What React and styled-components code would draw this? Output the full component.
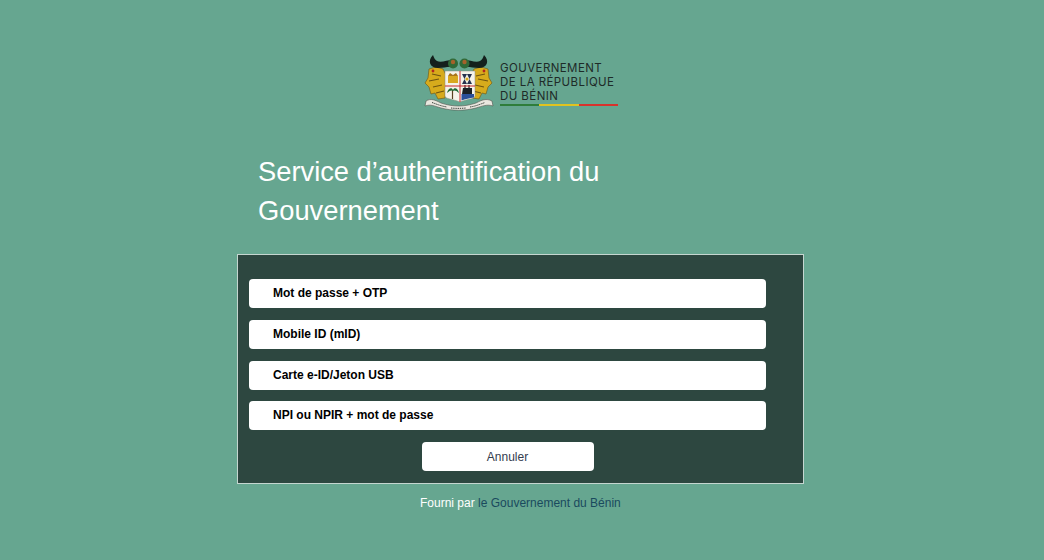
import styled, { createGlobalStyle } from "styled-components";

const GlobalStyle = createGlobalStyle`
  html, body {
    margin: 0;
    padding: 0;
    background: #66a690;
    font-family: "Liberation Sans", Arial, sans-serif;
  }
`;

const Page = styled.div`
  width: 1044px;
  height: 560px;
  overflow: hidden;
  background: #66a690;
  display: flex;
  flex-direction: column;
`;

const LogoRow = styled.div`
  display: flex;
  align-items: flex-start;
  gap: 6px;
  margin: 54px 0 0 423px;
  height: 58px;
`;

const LogoText = styled.div`
  padding-top: 7px;
  width: 118px;
  color: #1e2b28;
`;

const LogoLine = styled.div`
  font-family: "Inter", sans-serif;
  font-size: 11.5px;
  letter-spacing: 0.42px;
  line-height: 14px;
  white-space: nowrap;
`;

const Flag = styled.div`
  display: flex;
  height: 2px;
  margin-top: 1px;
`;

const FlagPart = styled.span`
  flex: 1;
  background: ${(p) => p.color};
`;

const Title = styled.h1`
  margin: 41px 0 0 258px;
  width: 400px;
  font-size: 27.3px;
  line-height: 38.5px;
  font-weight: 400;
  color: #fff;
`;

const Panel = styled.div`
  box-sizing: border-box;
  width: 567px;
  height: 230px;
  margin: 24px 0 0 237px;
  padding: 24px 37px 0 11px;
  background: #2d4740;
  border: 1px solid #c5d6d0;
  display: flex;
  flex-direction: column;
  gap: 11.75px;
`;

const Method = styled.button`
  box-sizing: border-box;
  height: 29px;
  padding: 0 0 1px 24px;
  border: none;
  border-radius: 4px;
  background: #fff;
  color: #000;
  font: bold 12px "Liberation Sans", Arial, sans-serif;
  text-align: left;
`;

const Cancel = styled.button`
  box-sizing: border-box;
  align-self: center;
  width: 172px;
  height: 29px;
  border: none;
  border-radius: 4px;
  background: #fff;
  color: #333c4e;
  font: 12px "Liberation Sans", Arial, sans-serif;
`;

const Footer = styled.p`
  margin: 12px 0 0 420px;
  font-size: 12px;
  line-height: 14px;
  color: #fff;
`;

const FooterLink = styled.a`
  color: #1a4a5e;
  text-decoration: none;
`;

function Crest() {
  return (
    <svg width="71" height="58" viewBox="0 0 71 58">
      {/* panthers */}
      <path d="M6 15 L13 13 L20 15 L23 21 L22 44 L15 45 L12 39 L8 40 L6 33 L2 29 L5 24 Z" fill="#d7ab1c" stroke="#6f5410" strokeWidth="0.6" />
      <path d="M65 15 L58 13 L51 15 L48 21 L49 44 L56 45 L59 39 L63 40 L65 33 L69 29 L66 24 Z" fill="#d7ab1c" stroke="#6f5410" strokeWidth="0.6" />
      <path d="M9 20 L18 22 M6 27 L16 25 M10 33 L19 31 M13 39 L21 37 M62 20 L53 22 M65 27 L55 25 M61 33 L52 31 M58 39 L50 37" stroke="#6f5410" strokeWidth="1.2" fill="none" />
      <circle cx="10" cy="17" r="1.4" fill="#b3261e" />
      <circle cx="61" cy="17" r="1.4" fill="#b3261e" />
      {/* horns */}
      <path d="M10 1 C4 7 7 14 15 14 C21 14 25 12 30 13 L30 6 C24 6 18 9 14 7 C12 6 11 4 10 1 Z" fill="#14201c" />
      <path d="M61 1 C67 7 64 14 56 14 C50 14 46 12 41 13 L41 6 C47 6 53 9 57 7 C59 6 60 4 61 1 Z" fill="#14201c" />
      <circle cx="30" cy="9.5" r="5" fill="#2f6a38" />
      <circle cx="30" cy="8" r="2.2" fill="#a5622a" />
      <circle cx="41.5" cy="9.5" r="5" fill="#2f6a38" />
      <circle cx="41.5" cy="8" r="2.2" fill="#a5622a" />
      {/* shield */}
      <path d="M22 17 H52 V42 C52 45 44 45 37 48 C30 45 22 45 22 42 Z" fill="#f5f3ea" stroke="#8b8a7c" strokeWidth="0.5" />
      <rect x="25" y="22" width="10" height="7" fill="#d8a820" />
      <path d="M25 22 L27 19 L30 21 L33 19 L35 22 Z" fill="#a8741a" />
      <path d="M39 20 H49 L44 30 Z M39 30 H49 L44 20 Z" fill="#27324f" />
      <circle cx="44" cy="25" r="1.6" fill="#d8a820" />
      <path d="M29.5 36 V45" stroke="#5a4020" strokeWidth="1.2" />
      <path d="M24 39 C25 34 29 33 30 36 C31 33 35 34 36 39 C33 36 31 36 30 37 C29 36 27 36 24 39 Z" fill="#1f6b35" />
      <path d="M40 34 H49 V40 H39 Z" fill="#1b2026" />
      <path d="M42 34 V31 M46 34 V31" stroke="#1b2026" strokeWidth="1.2" />
      <path d="M38.5 40 H51 V43.5 C47 44 42 45 38.5 46.5 Z" fill="#2a4f9a" />
      <path d="M37 17 V48 M22 32 H52" stroke="#c8282e" strokeWidth="1" />
      {/* ribbon */}
      <path d="M3 47 C8 44 12 46 18 49 C30 53 41 53 53 49 C59 46 63 44 69 47 L70 52 C64 50 60 52 53 54 C41 57 30 57 18 54 C11 52 8 50 2 52 Z" fill="#e9e7df" stroke="#4f544e" strokeWidth="0.6" />
      <path d="M9 48.5 C16 51 18 52 24 53 M28 54 C33 54.5 38 54.5 43 54 M47 53 C53 52 55 51 62 48.5" stroke="#3a3f3a" strokeWidth="1" strokeDasharray="1.4 0.8" fill="none" />
    </svg>
  );
}

export default function App() {
  return (
    <Page>
      <GlobalStyle />
      <LogoRow>
        <Crest />
        <LogoText>
          <LogoLine>GOUVERNEMENT</LogoLine>
          <LogoLine>DE LA RÉPUBLIQUE</LogoLine>
          <LogoLine>DU BÉNIN</LogoLine>
          <Flag>
            <FlagPart color="#2e7d3a" />
            <FlagPart color="#e0c320" />
            <FlagPart color="#d8322c" />
          </Flag>
        </LogoText>
      </LogoRow>
      <Title>Service d’authentification du Gouvernement</Title>
      <Panel>
        <Method>Mot de passe + OTP</Method>
        <Method>Mobile ID (mID)</Method>
        <Method>Carte e-ID/Jeton USB</Method>
        <Method>NPI ou NPIR + mot de passe</Method>
        <Cancel>Annuler</Cancel>
      </Panel>
      <Footer>
        Fourni par <FooterLink href="#">le Gouvernement du Bénin</FooterLink>
      </Footer>
    </Page>
  );
}
